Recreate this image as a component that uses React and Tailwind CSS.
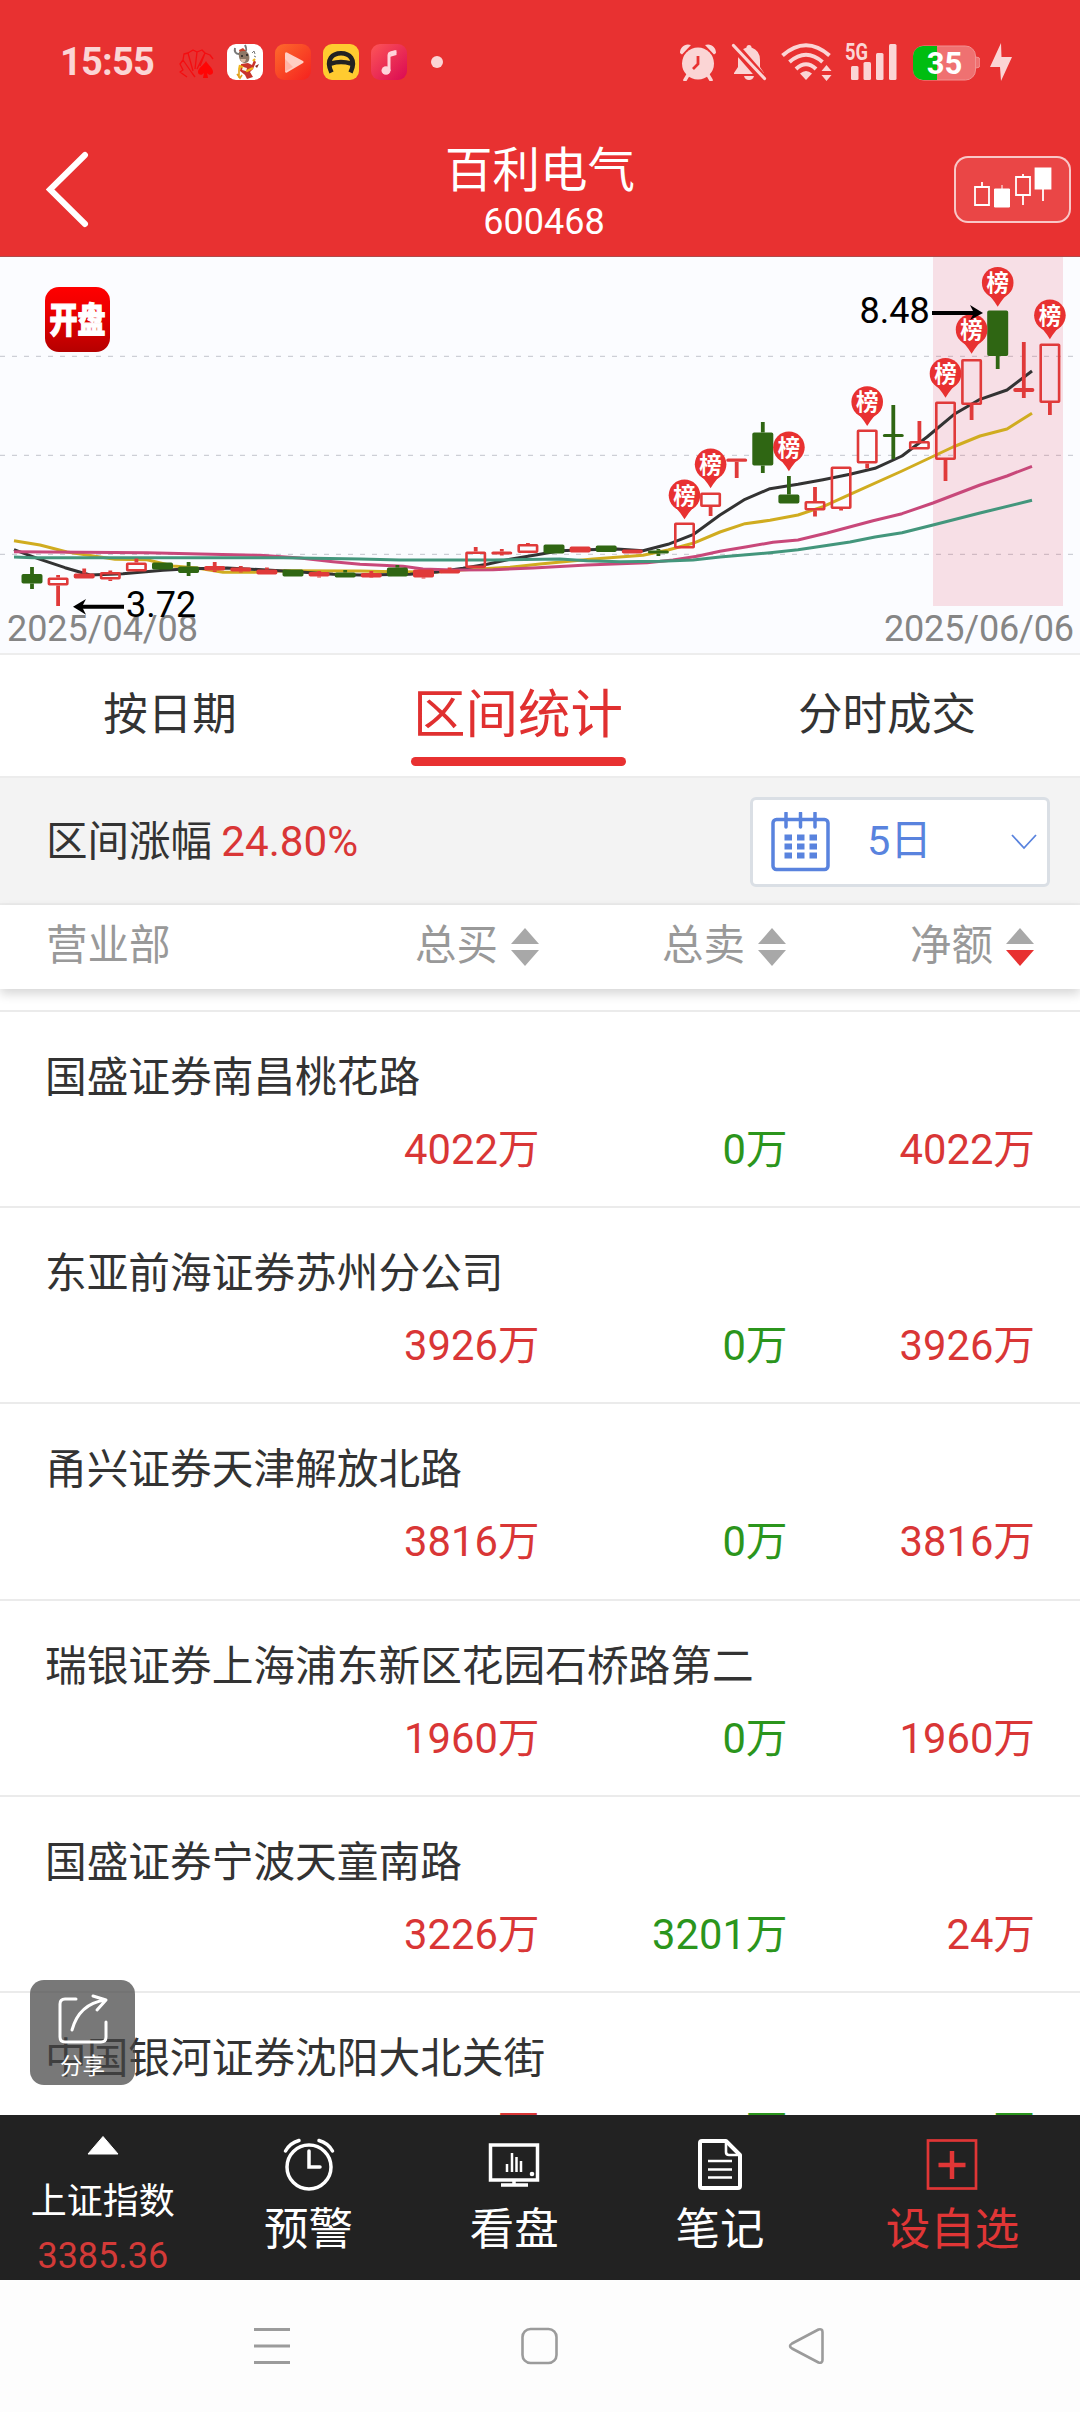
const MA_LINES = [
  {
    stroke: "#d0ac20",
    points:
      "14,540.7 40,545 67,552 115,559.3 147,559.7 173,566 197,568 223,572.3 253,572.3 283,570.7 360,571 393,571.7 437,572 460,570 510,567.3 540,564 593,559 643,555.3 668,550 693,543.3 720,532 745,523.7 770,520.3 798,515 823,506.7 850,494.3 902,471 953,447 980,436 1007,429 1032,413.3",
  },
  {
    stroke: "#333333",
    points:
      "14,549.7 38,558.7 65,567.7 90,575 123,573.7 163,570.3 190,568.7 227,568 267,570 300,572 333,574.3 360,575 410,574.3 437,572 463,568.3 487,564.3 510,559.3 537,554.7 560,550.7 587,549.7 617,549 643,550.7 668,544.3 693,534.7 720,515 745,499.3 770,488.7 798,484.3 823,479.7 850,474.3 875,468.3 902,456 927,437 955,413.7 980,399.3 1007,390 1032,371",
  },
  {
    stroke: "#c8487a",
    points:
      "14,551.7 147,552.7 200,554 260,555.3 300,558 333,561.7 360,564.3 403,566.3 423,569 453,570 493,569.7 533,568 587,565 647,562.7 673,560 697,556.3 720,551.3 747,546.7 773,542.3 798,540 827,533 873,520.7 902,513.7 933,503 980,485 1007,476 1032,466.3",
  },
  {
    stroke: "#43967c",
    points:
      "14,557 33,557.7 283,557.7 360,559 400,560 493,560 560,559 587,560.7 620,561.7 660,561.3 693,560 720,557 770,552.7 798,549.7 850,542 875,537 902,532.7 933,525 980,513 1032,500.3",
  },
];

// [type, high, bodyTop, bodyBottom, low] - "up" is hollow, "flat" is a filled red body
const CANDLES = [
  ["down", 567, 574, 583.5, 589],
  ["up", 575, 577.5, 585.5, 606],
  ["flat", 568.5, 573.5, 578.5, 578.5],
  ["up", 570.5, 572, 579.5, 581],
  ["up", 558.5, 562.5, 571.5, 571.5],
  ["down", 562.5, 562.5, 569.5, 569.5],
  ["down", 562, 566.5, 573, 576],
  ["flat", 562, 566, 570.5, 572],
  ["flat", 566, 567.5, 571.5, 572.5],
  ["flat", 567.5, 569.5, 574.5, 574.5],
  ["down", 569.5, 569.5, 576.5, 576.5],
  ["flat", 571, 572, 576.5, 577.5],
  ["down", 570, 572.5, 577.5, 577.5],
  ["flat", 571, 573, 577.5, 578],
  ["down", 565, 567.5, 576.5, 576.5],
  ["flat", 569.5, 569.5, 577.5, 578.5],
  ["flat", 567.5, 569.5, 573.5, 573.5],
  ["up", 547, 551.5, 568, 568],
  ["flat", 549, 551.5, 554, 555.5],
  ["up", 543, 544, 553, 553],
  ["down", 544.5, 544.5, 553.5, 553.5],
  ["flat", 546.5, 546.5, 552.5, 552.5],
  ["down", 545.5, 545.5, 552, 552],
  ["flat", 549.5, 549.5, 553.5, 553.5],
  ["down", 549, 550.5, 553.5, 556],
  ["up", 522.5, 522.5, 548.5, 548.5],
  ["up", 492.5, 492.5, 507, 516],
  ["flat", 458.5, 458.5, 461.8, 478],
  ["down", 422, 432.5, 465.5, 473],
  ["down", 476, 494.5, 503.5, 503.5],
  ["up", 487, 501, 510.5, 516.5],
  ["up", 466.5, 466.5, 509, 510.5],
  ["up", 429.5, 429.5, 463.5, 468.5],
  ["down", 405, 434, 437, 459],
  ["up", 421, 441, 449.5, 449.5],
  ["up", 401.5, 401.5, 460, 481],
  ["up", 359, 359, 405, 420],
  ["down", 310.5, 310.5, 356, 369],
  ["flat", 342, 388, 392, 398],
  ["up", 343.5, 343.5, 403, 415],
];

// index of the candle and centre of the marker above it
const MARKERS = [
  [25, 495.3],
  [26, 464.3],
  [29, 447.3],
  [32, 402],
  [35, 373.7],
  [36, 329.7],
  [37, 282.7],
  [39, 315.3],
];

const candleX = (i) => 32 + i * 26.1;

const ROWS = [
  { name: "国盛证券南昌桃花路", buy: "4022万", sell: "0万", net: "4022万" },
  { name: "东亚前海证券苏州分公司", buy: "3926万", sell: "0万", net: "3926万" },
  { name: "甬兴证券天津解放北路", buy: "3816万", sell: "0万", net: "3816万" },
  { name: "瑞银证券上海浦东新区花园石桥路第二", buy: "1960万", sell: "0万", net: "1960万" },
  { name: "国盛证券宁波天童南路", buy: "3226万", sell: "3201万", net: "24万" },
  { name: "中国银河证券沈阳大北关街", buy: "万", sell: "万", net: "万", netDown: true },
];

const StatusBar = () => (
  <div className="flex h-[124px] items-center pl-[60px] pr-[68px] text-[#fbd5d5]">
    <span className="w-[119px] text-[38px] font-bold leading-none tracking-[-0.8px]">15:55</span>

    <div className="flex items-center gap-3">
      {/* card fan */}
      <svg className="size-9" viewBox="0 0 36 36" fill="none" stroke="#f40d10" strokeWidth="1.3" strokeLinejoin="round">
        <path d="M8 33L1 28l3-2-3-6 3-4 9 13M4 16l1-6 4-1 5 18M9 9l5-3 4 2-2 17M18 8l5-2 3 3-8 16M26 9l5 2 3 4M26 9l-5 13M13 29l3 4" />
        <path d="M27 17c2 4 7 7 7 11 0 3-4 4-6 1l1 5h-5l1-5c-2 3-6 2-6-1 0-4 6-7 8-11z" fill="#ff0505" stroke="none" />
      </svg>
      {/* ox mascot */}
      <svg className="size-9" viewBox="0 0 36 36">
        <rect width="36" height="36" rx="9" fill="#fff" />
        <path d="M8 4c-1 4 1 6 4 6M18 1c2 4 2 6-1 8" fill="none" stroke="#777" strokeWidth="2" />
        <path d="M12 6l4-2 3 3-6 2z" fill="#c8422a" />
        <path d="M12 8c4-2 9-1 10 3s0 8-4 8-7-4-6-11z" fill="#8d7765" />
        <path d="M13 15h6l-1 3h-3z" fill="#d9b9a4" />
        <path d="M14 12h2M19 11h2" stroke="#222" strokeWidth="1.5" />
        <path d="M14 20l7-1 4 2 2-5 2 2-3 7-3 3 3 5-6 2-2-4-5-4z" fill="#c9332a" />
        <path d="M14 22l6 5 6-3M13 21l-1 5M26 17l2-2" fill="none" stroke="#efb41c" strokeWidth="2.2" />
        <path d="M16 23l4 1-1 3-4-1z" fill="#f8efe8" />
        <path d="M12 26v8M10 30l3 4 2-3" fill="none" stroke="#e0a01c" strokeWidth="1.6" />
        <path d="M25 9l2-2 1 3M27 12l2 1" fill="none" stroke="#777" />
        <path d="M28 22l4-2-2 4z" fill="#8a2d1e" />
      </svg>
      {/* video player */}
      <svg className="size-9" viewBox="0 0 36 36">
        <defs>
          <linearGradient id="video" x1="0" y1="0" x2="1" y2="1">
            <stop offset="0" stopColor="#fd6b2c" />
            <stop offset="1" stopColor="#f5211f" />
          </linearGradient>
        </defs>
        <rect width="36" height="36" rx="9" fill="url(#video)" />
        <path d="M12 8.500l16 8.500q1.500 1 0 2l-16 9.500q-2 .8-2-1.500v-17q0-2.300 2-1.500z" fill="#ffcfc4" />
        <path d="M10 27.500V15l8 8z" fill="#ffb5a6" />
      </svg>
      {/* yellow helmet */}
      <svg className="size-9" viewBox="0 0 36 36">
        <rect width="36" height="36" rx="9" fill="#ffcb30" />
        <path d="M8.500 28.500C2 15 10 9.300 18 9.300S34 15 27.500 28.500M8 19.500q10-3 20 0" fill="none" stroke="#222" strokeWidth="4.600" />
      </svg>
      {/* music */}
      <svg className="size-9" viewBox="0 0 36 36">
        <defs>
          <linearGradient id="music" x1="0" y1="0" x2="1" y2="1">
            <stop offset="0" stopColor="#fd5557" />
            <stop offset="1" stopColor="#da0953" />
          </linearGradient>
        </defs>
        <rect width="36" height="36" rx="9" fill="url(#music)" />
        <ellipse cx="15" cy="26.500" rx="4.500" ry="4.300" fill="#ffd3da" />
        <path d="M18 27V11q0-1.500 1.500-2l5.500-1.500" fill="none" stroke="#ffd3da" strokeWidth="3" />
        <path d="M18.500 13l7-2V6.300l-5 1.500z" fill="#ffd3da" />
      </svg>
    </div>
    <span className="ml-6 size-3 rounded-full bg-[#fbd5d5]" />

    <div className="ml-auto flex items-center">
      <svg className="h-[38px] w-[38px]" viewBox="0 0 38 38" fill="currentColor">
        <circle cx="19" cy="20.500" r="16" />
        <path d="M1 10C1 4 6 0 12 2L3 11.500zM37 10C37 4 32 0 26 2l9 9.500z" />
        <path d="M9 32l-3 5M29 32l3 5" stroke="currentColor" strokeWidth="3.500" strokeLinecap="round" />
        <path d="M19 13v8l-5 5" fill="none" stroke="#e83131" strokeWidth="2.800" />
      </svg>
      <svg className="ml-[14px] h-[38px] w-[36px]" viewBox="0 0 36 38" fill="currentColor">
        <path d="M18 2q2.500 0 2.500 2.500Q29 7.500 29 17v7l4 6v1H3v-1l4-6v-8Q7 7.500 15.500 4.500 15.500 2 18 2z" />
        <path d="M13 33h10q-1 4-5 4t-5-4z" />
        <path d="M-1 -2L34 38" stroke="#e83131" strokeWidth="9" />
        <path d="M2.500 2.500L33.500 35.500" stroke="currentColor" strokeWidth="3.200" strokeLinecap="round" />
      </svg>
      <svg className="ml-[14px] h-[38px] w-[51px]" viewBox="0 0 51 38" fill="none" stroke="currentColor" strokeWidth="4">
        <path d="M1.500 12.500Q25-8 48.500 12.500M8.500 19Q25 4.500 41.500 19M15 26Q25 16.500 35 26" />
        <path d="M25 37l-6-6.500q6-5 12 0z" fill="currentColor" stroke="none" />
        <path d="M45.500 22l5 6h-10zM45.500 38l5-6h-10z" fill="currentColor" stroke="none" />
      </svg>
      <svg className="ml-[13px] h-[38px] w-[53px] overflow-visible" viewBox="0 0 53 38" fill="currentColor">
        <text x="0" y="16.500" fontSize="23" fontWeight="700" textLength="23" lengthAdjust="spacingAndGlyphs">5G</text>
        <rect x="6" y="23" width="7.500" height="14" rx="1.500" />
        <rect x="18.500" y="19" width="7.500" height="18" rx="1.500" />
        <rect x="31" y="10" width="7.500" height="27" rx="1.500" />
        <rect x="44" y="1" width="7.500" height="36" rx="1.500" />
      </svg>
      <svg className="ml-[15px] h-[38px] w-[67px]" viewBox="0 0 67 38">
        <defs>
          <clipPath id="battery">
            <rect x="0" y="3" width="63" height="34" rx="10" />
          </clipPath>
        </defs>
        <rect x="0.500" y="3" width="62" height="34" rx="10" fill="#ef7171" stroke="#f29292" />
        <path d="M63 14q4 0 4 3v5q0 3-4 3" fill="#ef7171" stroke="#f29292" />
        <rect y="3" width="24" height="34" fill="#00bd11" clipPath="url(#battery)" />
        <text x="31.500" y="30.500" fontSize="31" fontWeight="700" fill="#fff" textAnchor="middle">35</text>
      </svg>
      <svg className="ml-[10px] h-[40px] w-[22px]" viewBox="0 0 22 40" fill="currentColor">
        <path d="M11 1L0 25h10l1 14L22 15H11.500z" />
      </svg>
    </div>
  </div>
);

const TitleBar = () => (
  <div className="grid h-[132px] grid-cols-[1fr_auto_1fr] items-center pl-[46px] pr-[9px]">
    <svg className="h-[78px] w-[44px]" viewBox="0 0 44 78" fill="none" stroke="#fff" strokeWidth="6" strokeLinecap="round">
      <path d="M39 4L4 38.500l35 34.500" />
    </svg>
    <div className="-ml-[37px] pt-[8px] text-center text-white">
      <div className="text-[47.500px] leading-[56px]">百利电气</div>
      <div className="pl-2 text-[36px] leading-[46px]">600468</div>
    </div>
    <button className="mb-[1px] flex h-[67px] w-[117px] items-center justify-center justify-self-end rounded-[14px] border-2 border-white/70 bg-white/10">
      <svg className="h-[46px] w-[80px]" viewBox="0 0 80 46" fill="none" stroke="#fff" strokeWidth="1.800">
        <path d="M2 20h14v18H2zM9 20v-5" />
        <path d="M21.500 22h15v18h-15zM29 22v-4" fill="#fff" strokeWidth="1" />
        <path d="M43 10h14v18H43zM50 10V7M50 28v10" />
        <path d="M62.500 1.500h15v20h-15zM70 21v13" fill="#fff" />
      </svg>
    </button>
  </div>
);

const KLineChart = () => (
  <svg className="block h-[398px] w-full border-b-2 border-[#ededed] bg-[#fbfcff]" viewBox="0 257 1080 396" preserveAspectRatio="xMinYMin">
    <defs>
      <linearGradient id="logo" x1="0" y1="0" x2="0" y2="1">
        <stop offset="0" stopColor="#ff0000" />
        <stop offset="0.350" stopColor="#ee0000" />
        <stop offset="1" stopColor="#b50000" />
      </linearGradient>
    </defs>

    {[356.3, 455.3, 554.3].map((y) => (
      <line key={y} x1="0" x2="1074" y1={y} y2={y} stroke="#cdcfd6" strokeWidth="1.200" strokeDasharray="5 7" />
    ))}
    <rect x="933" y="257" width="130" height="349" fill="rgba(230,60,90,0.15)" />

    <rect x="45" y="287" width="65" height="65" rx="14" fill="url(#logo)" />
    <text x="49.500" y="332.500" fontSize="35" fontWeight="900" fill="#fff" stroke="#fff" strokeWidth="1.200" textLength="56" lengthAdjust="spacingAndGlyphs">开盘</text>

    {MA_LINES.map((line) => (
      <polyline key={line.stroke} points={line.points} fill="none" stroke={line.stroke} strokeWidth="3" strokeLinejoin="round" />
    ))}

    {CANDLES.map(([type, high, top, bottom, low], i) => {
      const x = candleX(i);
      const color = type === "down" ? "#2f6613" : "#e03a3a";
      return (
        <g key={i} stroke={color} strokeWidth="2.600">
          <path d={`M${x} ${high}V${top}M${x} ${bottom}V${low}`} strokeWidth="3.800" />
          <rect
            x={x - 9.2}
            y={top + 1.3}
            width="18.400"
            height={Math.max(bottom - top - 2.6, 0.5)}
            rx="0.500"
            fill={type === "up" ? "none" : color}
          />
        </g>
      );
    })}

    {MARKERS.map(([i, cy]) => (
      <g key={i} transform={`translate(${candleX(i)} ${cy})`}>
        <path d="M-13.500 8Q-6 14 0 24 6 14 13.500 8z" fill="#e83131" />
        <circle r="15.800" fill="#e83131" />
        <text y="8.300" fontSize="22.500" fontWeight="700" fill="#fff" textAnchor="middle">榜</text>
      </g>
    ))}

    <g fontSize="36">
      <text x="7" y="641" fill="#858585" textLength="191">2025/04/08</text>
      <text x="884" y="641" fill="#858585" textLength="190">2025/06/06</text>
      <text x="126" y="616.700" fill="#000">3.72</text>
      <text x="859.500" y="322.700" fill="#000">8.48</text>
    </g>
    <g stroke="#000" strokeWidth="4">
      <path d="M78 606.700h46M932 313h44" />
    </g>
    <path d="M73 606.700L86 599l-4 7.700 4 8zM983 313l-13-8 4 8-4 7z" fill="#000" />
  </svg>
);

const Tabs = () => (
  <div className="grid h-[121px] grid-cols-[338px_1fr_382px] text-[44.500px] text-[#333]">
    <div className="flex items-center justify-center pl-[2px]">按日期</div>
    <div className="flex flex-col items-center text-[52.500px] text-[#e03030]">
      <div className="h-[102px] leading-[121px]">区间统计</div>
      <div className="h-[9px] w-[215px] rounded-full bg-[#e83131]" />
    </div>
    <div className="flex items-center justify-center pr-[4px]">分时成交</div>
  </div>
);

const FilterBar = () => (
  <div className="flex h-[129px] items-center justify-between border-y-2 border-[#ececec] bg-[#f3f3f3] pl-[46px] pr-[30px] pt-[2px] text-[41.500px] text-[#333]">
    <div>
      区间涨幅 <span className="-ml-[1px] text-[42.200px] text-[#d93636]">24.80%</span>
    </div>
    <div className="flex h-[90px] w-[300px] items-center rounded-[6px] border-3 border-[#dadfe5] bg-white pl-[18px] pr-[9px] text-[#5983de]">
      <svg className="size-[60px]" viewBox="0 0 60 60" fill="none" stroke="#5983de" strokeWidth="3.500">
        <rect x="2" y="7.500" width="55" height="50" rx="3.500" />
        <path d="M15 1v14M29.500 1v14M44 1v14" strokeLinecap="round" />
        <path d="M13.500 25.500h32.500M13.500 34.500h32.500M13.500 43.500h32.500" strokeWidth="6" strokeDasharray="7.500 5" />
      </svg>
      <span className="ml-[36px]">5日</span>
      <svg className="ml-auto h-[18px] w-[28px]" viewBox="0 0 28 18" fill="none" stroke="#5983de" strokeWidth="1.800">
        <path d="M2 2l12 13L26 2" />
      </svg>
    </div>
  </div>
);

const SortHeader = ({ label, active = false }) => (
  <div className="flex items-center justify-end gap-[13px]">
    {label}
    <svg className="h-[38px] w-[28px]" viewBox="0 0 28 38" fill="#a8a8a8">
      <path d="M14 0l14 16H0z" />
      <path d="M0 22h28L14 38z" fill={active ? "#e83131" : "#a8a8a8"} />
    </svg>
  </div>
);

const TableHeader = () => (
  <div className="relative grid h-[84px] grid-cols-[240px_253px_247px_248px] items-center bg-white pb-[1px] pl-[46px] text-[41.500px] text-[#999] shadow-[0_5px_10px_rgba(0,0,0,0.16)]">
    <div>营业部</div>
    <SortHeader label="总买" />
    <SortHeader label="总卖" />
    <SortHeader label="净额" active />
  </div>
);

const BranchRow = ({ row }) => (
  <div className="h-[196.200px] shrink-0 border-t-2 border-[#ebebeb] pl-[45px] pt-[36px] text-[41.700px] text-[#333]">
    <div className="h-[60px] whitespace-nowrap leading-[60px]">{row.name}</div>
    <div className="mt-[12px] grid h-[60px] grid-cols-[494.500px_248px_247.500px] text-right leading-[60px] text-[#d93636]">
      <div>{row.buy}</div>
      <div className="text-[#2b951c]">{row.sell}</div>
      <div className={row.netDown ? "text-[#2b951c]" : ""}>{row.net}</div>
    </div>
  </div>
);

const ShareButton = () => (
  <button className="absolute bottom-[30px] left-[30px] flex h-[105px] w-[105px] flex-col items-center rounded-[14px] bg-[#444]/72 pt-[13px] text-white">
    <svg className="h-[52px] w-[52px]" viewBox="0 0 52 52" fill="none" stroke="#fff" strokeWidth="3" strokeLinecap="round" strokeLinejoin="round">
      <path d="M19 6H8q-5 0-5 5v33q0 5 5 5h36q5 0 5-5V29" />
      <path d="M15 37Q22 11 48 7M36 3l13 4-9 10" />
    </svg>
    <span className="mt-[5px] text-[22.500px] leading-[32px]">分享</span>
  </button>
);

const NavItem = ({ label, icon, className = "text-white" }) => (
  <div className={`flex flex-col items-center pt-[22px] ${className}`}>
    {icon}
    <span className="mt-[7px] text-[44.500px] leading-[64px]">{label}</span>
  </div>
);

const BottomBar = () => (
  <div className="grid h-[165px] grid-cols-[1fr_1fr_1fr_1fr_1.250fr] bg-[#222]">
    <div className="flex flex-col items-center text-[36px] text-white">
      <svg className="mt-[20px] h-[20px] w-[32px]" viewBox="0 0 32 20" fill="#fff">
        <path d="M16 1.500L31 19H1z" stroke="#fff" strokeLinejoin="round" />
      </svg>
      <span className="mt-[21px] leading-[52px]">上证指数</span>
      <span className="mt-[2px] leading-[52px] text-[#d33a38]">3385.36</span>
    </div>
    <NavItem
      label="预警"
      icon={
        <svg className="size-[54px]" viewBox="0 0 54 54" fill="none" stroke="currentColor" strokeWidth="3.500" strokeLinecap="round">
          <circle cx="27" cy="30" r="22" />
          <path d="M27 14v16h11M3.500 14Q8 6 17 3.500M50.500 14Q46 6 37 3.500" />
        </svg>
      }
    />
    <NavItem
      label="看盘"
      icon={
        <svg className="size-[54px]" viewBox="0 0 54 54" fill="none" stroke="currentColor" strokeWidth="3.500">
          <path d="M3.500 8h47v35h-47zM27 43v4M14 48h27" />
          <path d="M20 27v8M25 16v19M29.500 20v15M34 24v11" strokeWidth="2.500" />
          <circle cx="45" cy="37" r="2.300" fill="currentColor" stroke="none" />
        </svg>
      }
    />
    <NavItem
      label="笔记"
      icon={
        <svg className="size-[54px]" viewBox="0 0 54 54" fill="none" stroke="currentColor" strokeWidth="4" strokeLinejoin="round">
          <path d="M9.500 4h23.500l14 14v31q0 2-2 2H9q-2 0-2-2V6q0-2 2-2z" />
          <path d="M33 4v11q0 3 3 3h11M15 24h24M15 32.500h24M15 40.500h24" strokeWidth="2.600" />
        </svg>
      }
    />
    <NavItem
      label="设自选"
      className="pl-[2px] text-[#e03636]"
      icon={
        <svg className="size-[54px]" viewBox="0 0 54 54" fill="none" stroke="currentColor" strokeWidth="2.700">
          <rect x="3" y="3.500" width="48" height="48" />
          <path d="M27 14v28M13.500 28h27" strokeWidth="4.500" />
        </svg>
      }
    />
  </div>
);

const SystemNav = () => (
  <div className="flex h-[132px] items-center justify-between bg-[#fdfdfd] pl-[252px] pr-[254px]">
    <svg className="size-10" viewBox="0 0 40 40" stroke="#9b9b9b" strokeWidth="3">
      <path d="M2 3.500h36M2 20h36M2 36.500h36" />
    </svg>
    <svg className="size-10" viewBox="0 0 40 40" fill="none" stroke="#9b9b9b" strokeWidth="2.600">
      <rect x="3.500" y="3" width="34" height="34" rx="8" />
    </svg>
    <svg className="size-10" viewBox="0 0 40 40" fill="none" stroke="#9b9b9b" strokeWidth="2.600" strokeLinejoin="round">
      <path d="M6 17.500L32.500 3.500Q36.500 2.500 36.500 6v28q0 3.500-4 2.500L6 22.500q-4-2.500 0-5z" />
    </svg>
  </div>
);

export default function App() {
  return (
    <div className="flex h-[2412px] w-[1080px] flex-col overflow-hidden bg-white font-['Roboto','Noto_Sans_CJK_SC',sans-serif]">
      <header className="h-[257px] shrink-0 border-b border-[#b04a4a] bg-[#e83131]">
        <StatusBar />
        <TitleBar />
      </header>
      <KLineChart />
      <Tabs />
      <FilterBar />
      <TableHeader />
      <main className="relative flex min-h-0 flex-1 flex-col overflow-hidden pt-[21px]">
        {ROWS.map((row) => (
          <BranchRow key={row.name} row={row} />
        ))}
        <ShareButton />
      </main>
      <BottomBar />
      <SystemNav />
    </div>
  );
}
